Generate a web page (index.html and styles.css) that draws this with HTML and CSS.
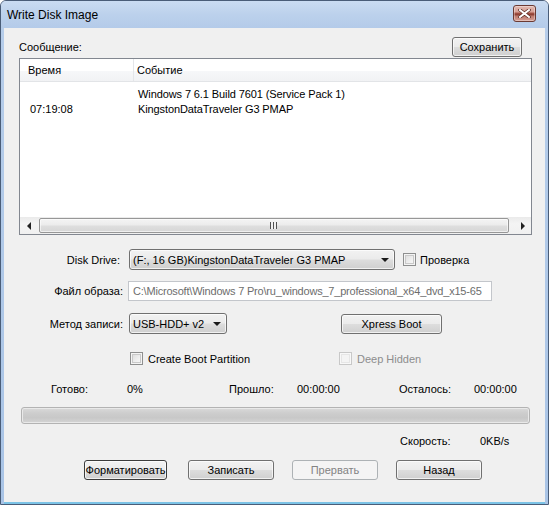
FILE: index.html
```html
<!DOCTYPE html>
<html>
<head>
<meta charset="utf-8">
<link rel="stylesheet" href="styles.css">
</head>
<body>
<div class="window">
  <div class="titlebar">
    <span class="title">Write Disk Image</span>
    <div class="close">
      <svg width="13" height="9" viewBox="0 0 13 9">
        <path d="M2 1 L11 8 M11 1 L2 8" stroke="#5a2a22" stroke-width="3.4" stroke-linecap="square"/>
        <path d="M2 1 L11 8 M11 1 L2 8" stroke="#ffffff" stroke-width="2" stroke-linecap="square"/>
      </svg>
    </div>
  </div>
  <div class="client">
    <div class="top-row">
      <span>Сообщение:</span>
      <div class="btn save">Сохранить</div>
    </div>
    <div class="list">
      <div class="list-head">
        <div class="col1">Время</div>
        <div class="col2">Событие</div>
      </div>
      <div class="list-body">
        <div class="row"><div class="col1"></div><div class="col2">Windows 7 6.1 Build 7601 (Service Pack 1)</div></div>
        <div class="row"><div class="col1">07:19:08</div><div class="col2">KingstonDataTraveler G3 PMAP</div></div>
      </div>
      <div class="hscroll">
        <div class="arrow-btn"><span class="tri-left"></span></div>
        <div class="thumb"><span class="grip"></span></div>
        <div class="arrow-btn"><span class="tri-right"></span></div>
      </div>
    </div>

    <div class="form-row r-drive">
      <label class="lbl">Disk Drive:</label>
      <div class="combo drive"><span class="ctext">(F:, 16 GB)KingstonDataTraveler G3 PMAP</span><span class="tri-down"></span></div>
      <span class="chk check-verify"></span><span class="chk-label">Проверка</span>
    </div>
    <div class="form-row r-file">
      <label class="lbl">Файл образа:</label>
      <div class="textbox">C:\Microsoft\Windows 7 Pro\ru_windows_7_professional_x64_dvd_x15-65</div>
    </div>
    <div class="form-row r-method">
      <label class="lbl">Метод записи:</label>
      <div class="combo method"><span class="ctext">USB-HDD+ v2</span><span class="tri-down"></span></div>
      <div class="btn xpress">Xpress Boot</div>
    </div>
    <div class="check-row">
      <div class="check-item first"><span class="chk"></span><span class="chk-label">Create Boot Partition</span></div>
      <div class="check-item disabled"><span class="chk"></span><span class="chk-label">Deep Hidden</span></div>
    </div>
    <div class="stats">
      <span class="s1">Готово:</span><span class="s2">0%</span><span class="s3">Прошло:</span><span class="s4">00:00:00</span><span class="s5">Осталось:</span><span>00:00:00</span>
    </div>
    <div class="progress"></div>
    <div class="speed">
      <span class="sp1">Скорость:</span><span>0KB/s</span>
    </div>
    <div class="buttons">
      <div class="btn b-format default">Форматировать</div>
      <div class="btn b-write">Записать</div>
      <div class="btn b-abort disabled">Прервать</div>
      <div class="btn b-back">Назад</div>
    </div>
  </div>
</div>
</body>
</html>
```

FILE: styles.css
```css
html, body {
  margin: 0;
  padding: 0;
  background: #ffffff;
}
body {
  font-family: "Liberation Sans", Arial, sans-serif;
  font-size: 11px;
  color: #000;
}
.window {
  width: 549px;
  height: 505px;
  box-sizing: border-box;
  border: 1px solid #4a5d78;
  border-radius: 6px 6px 0 0;
  background: linear-gradient(#c4d7ef 0, #b6cdea 30px, #a9c4e6 100%);
  display: flex;
  flex-direction: column;
  overflow: hidden;
  position: relative;
}
.titlebar {
  height: 27px;
  display: flex;
  justify-content: space-between;
  align-items: flex-start;
  padding: 0 12px 0 6px;
  background: linear-gradient(#cadcf2, #bcd1ec 50%, #b4cbe9);
}
.title {
  font-size: 12px;
  line-height: 14px;
  margin-top: 7px;
  color: #000;
}
.close {
  margin-top: 4px;
  width: 23px;
  height: 17px;
  box-sizing: border-box;
  border: 1px solid #6b3a33;
  border-radius: 3px;
  background: linear-gradient(#e2b9b1 0, #d6a096 40%, #a65547 47%, #8e3f33 56%, #c07d71 70%, #d6a197 100%);
  display: flex;
  align-items: center;
  justify-content: center;
  box-shadow: inset 0 0 0 1px rgba(255,255,255,0.35);
}
.close svg { display: block; }
.client {
  flex: 1;
  margin: 0 3px 2px 3px;
  background: #f0f0f0;
  padding: 0 13px 0 15px;
  display: flex;
  flex-direction: column;
  box-shadow: 0 2px 0 #7cc3e6;
}
.top-row {
  margin-top: 9px;
  height: 20px;
  display: flex;
  justify-content: space-between;
  align-items: center;
}
.btn {
  box-sizing: border-box;
  height: 20px;
  border: 1px solid #707070;
  border-radius: 3px;
  background: linear-gradient(#f2f2f2 0, #ebebeb 48%, #dddddd 52%, #cfcfcf 100%);
  box-shadow: inset 0 0 0 1px rgba(255,255,255,0.7);
  display: flex;
  align-items: center;
  justify-content: center;
  white-space: nowrap;
}
.btn.save {
  width: 70px;
  margin-right: 10px;
}
.list {
  margin-top: 1px;
  height: 177px;
  box-sizing: border-box;
  border: 1px solid #828790;
  background: #fff;
  display: flex;
  flex-direction: column;
}
.list-head {
  height: 23px;
  box-sizing: border-box;
  display: flex;
  align-items: stretch;
  background: linear-gradient(#ffffff 0, #ffffff 55%, #f6f7f9 56%, #f1f2f4 100%);
  border-bottom: 1px solid #e2e4e7;
}
.list-head .col1 {
  width: 114px;
  box-sizing: border-box;
  padding-left: 8px;
  border-right: 1px solid #e4e6e9;
  display: flex;
  align-items: center;
}
.list-head .col2 {
  flex: 1;
  padding-left: 3px;
  display: flex;
  align-items: center;
}
.list-body {
  flex: 1;
  padding-top: 4px;
}
.row {
  display: flex;
  height: 15px;
  align-items: center;
}
.row .col1 {
  width: 114px;
  box-sizing: border-box;
  padding-left: 10px;
}
.row .col2 {
  padding-left: 4px;
  letter-spacing: -0.1px;
}
.hscroll {
  height: 17px;
  display: flex;
  align-items: center;
  background: linear-gradient(#eaeaea, #f4f4f4 40%, #f0f0f0);
}
.arrow-btn {
  width: 17px;
  height: 17px;
  display: flex;
  align-items: center;
  justify-content: center;
}
.tri-left {
  width: 0; height: 0;
  border-top: 4px solid transparent;
  border-bottom: 4px solid transparent;
  border-right: 4px solid #222;
}
.tri-right {
  width: 0; height: 0;
  border-top: 4px solid transparent;
  border-bottom: 4px solid transparent;
  border-left: 4px solid #222;
}
.thumb {
  flex: 1;
  height: 15px;
  box-sizing: border-box;
  margin: 0 5px 0 2px;
  border: 1px solid #979797;
  border-radius: 2px;
  background: linear-gradient(#f4f4f4, #ececec 45%, #dedede 55%, #d6d6d6);
  box-shadow: inset 0 0 0 1px rgba(255,255,255,0.6);
  display: flex;
  align-items: center;
  justify-content: center;
}
.grip {
  width: 7px;
  height: 7px;
  background: repeating-linear-gradient(90deg, #505050 0, #505050 1px, #f0f0f0 1px, #f0f0f0 3px);
  margin-right: 1px;
}
.form-row {
  display: flex;
  align-items: center;
}
.r-drive { margin-top: 14px; height: 21px; }
.r-file { margin-top: 11px; height: 20px; }
.r-method { margin-top: 12px; height: 21px; }
.lbl {
  width: 104px;
  text-align: right;
  margin-right: 6px;
}
.r-drive .lbl { padding-right: 3px; box-sizing: border-box; }
.combo {
  height: 21px;
  box-sizing: border-box;
  border: 1px solid #707070;
  border-radius: 3px;
  background: linear-gradient(#f2f2f2 0, #ebebeb 48%, #dddddd 52%, #cfcfcf 100%);
  box-shadow: inset 0 0 0 1px rgba(255,255,255,0.7);
  display: flex;
  align-items: center;
  justify-content: space-between;
  padding: 0 5px 0 3px;
}
.combo.drive { width: 266px; }
.combo.method { width: 98px; }
.tri-down {
  width: 0; height: 0;
  border-left: 4px solid transparent;
  border-right: 4px solid transparent;
  border-top: 4px solid #1a1a1a;
}
.chk {
  width: 13px;
  height: 13px;
  box-sizing: border-box;
  border: 1px solid #8e8f8f;
  background: linear-gradient(135deg, #d8d8d8 0, #f0f0f0 60%, #fdfdfd 100%);
  box-shadow: inset 0 0 0 1px #f4f4f4, inset 0 0 0 2px #c9c9c9;
  flex: none;
}
.check-verify { margin-left: 8px; }
.chk-label { margin-left: 4px; }
.textbox {
  width: 364px;
  height: 20px;
  box-sizing: border-box;
  margin-left: -1px;
  border: 1px solid #c3c6cb;
  background: #fff;
  color: #6d6d6d;
  padding: 0 0 0 4px;
  display: flex;
  align-items: center;
  white-space: nowrap;
  overflow: hidden;
  letter-spacing: -0.2px;
}
.btn.xpress {
  width: 101px;
  margin-left: 114px;
  margin-top: 1px;
}
.check-row {
  margin-top: 18px;
  height: 13px;
  display: flex;
  align-items: center;
}
.check-item {
  display: flex;
  align-items: center;
}
.check-item.first {
  width: 209px;
  margin-left: 111px;
}
.check-item .chk-label { margin-left: 5px; }
.check-item.disabled { color: #8d8d8d; }
.check-item.disabled .chk {
  border-color: #c8c8c8;
  background: #f4f4f4;
  box-shadow: inset 0 0 0 1px #f8f8f8, inset 0 0 0 2px #e6e6e6;
}
.stats {
  margin-top: 18px;
  height: 13px;
  line-height: 13px;
  display: flex;
  padding-left: 32px;
}
.stats span { white-space: nowrap; }
.s1 { width: 76px; }
.s2 { width: 102px; }
.s3 { width: 68px; }
.s4 { width: 102px; }
.s5 { width: 75px; }
.progress {
  margin: 11px 2px 0 2px;
  height: 17px;
  box-sizing: border-box;
  border: 1px solid #b3b3b3;
  border-radius: 3px;
  background: linear-gradient(#dadada 0, #cdcdcd 35%, #c8c8c8 65%, #d5d5d5 100%);
  box-shadow: inset 0 0 0 1px #e9e9e9;
}
.speed {
  margin-top: 11px;
  height: 13px;
  line-height: 13px;
  display: flex;
  padding-left: 381px;
}
.sp1 { width: 80px; }
.buttons {
  margin-top: 12px;
  display: flex;
  padding-left: 65px;
}
.buttons .btn { width: 86px; }
.buttons .b-format { width: 83px; border-color: #3c3c3c; }
.buttons .b-write { margin-left: 21px; }
.buttons .b-abort { margin-left: 18px; }
.buttons .b-back { margin-left: 18px; }
.btn.disabled {
  border-color: #adb2b5;
  background: #f4f4f4;
  box-shadow: none;
  color: #838383;
}
```
